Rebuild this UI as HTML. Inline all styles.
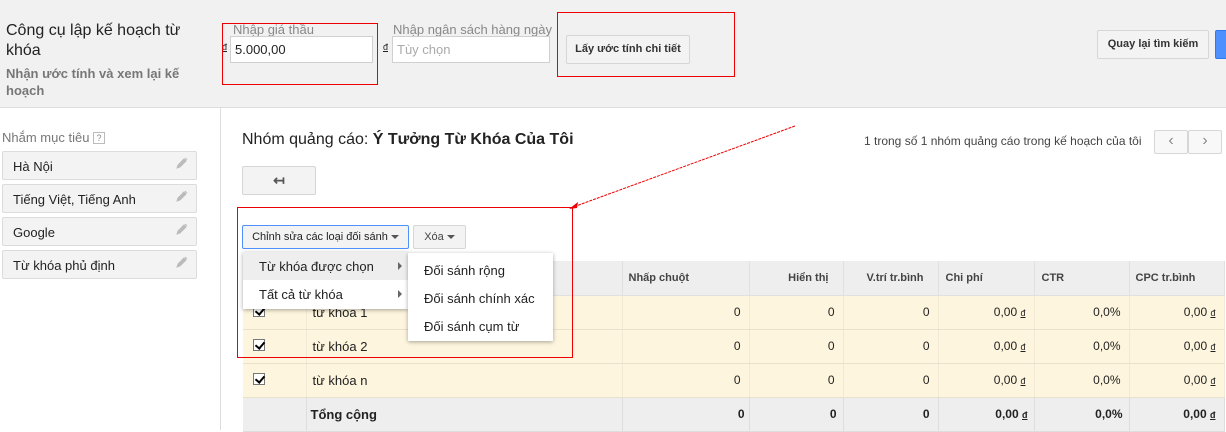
<!DOCTYPE html>
<html><head><meta charset="utf-8"><style>
*{box-sizing:border-box;margin:0;padding:0}
body{width:1226px;height:430px;overflow:hidden;position:relative;background:#fff;font-family:"Liberation Sans",Arial,sans-serif;color:#222}
.a{position:absolute}
.hdr{left:0;top:0;width:1226px;height:108px;background:#f1f1f1;border-bottom:1px solid #ddd}
.btn{position:absolute;background:#f3f3f3;border:1px solid #d6d6d6;border-radius:2px;font-size:11px;font-weight:bold;color:#333;text-align:center;white-space:nowrap}
.inp{position:absolute;background:#fff;border:1px solid #d0d0d0;font-size:13px;padding:5px 4px}
.side{left:0;top:108px;width:221px;height:322px;border-right:1px solid #ddd}
.tg{position:absolute;left:2px;width:195px;height:29px;background:#f3f3f3;border:1px solid #dcdcdc;border-radius:2px;font-size:13px;padding:7px 10px;color:#222}
.pen{position:absolute;right:8px;top:5px;width:12px;height:12px}
.red{position:absolute;border:1px solid #e00}
table{position:absolute;left:243px;top:261px;border-collapse:collapse;font-size:12px}
td{height:34px;border-right:1px solid #f0ead5;border-bottom:1px solid #e8e2cc;background:#fdf5dd;text-align:right;padding-right:8px;color:#222}
tr.h td{background:#eee;font-weight:bold;color:#444;border-color:#e0e0e0;font-size:11px}
tr.t td{background:#eee;font-weight:bold;border-color:#ddd}
.cb{display:inline-block;width:12px;height:12px;border:1px solid #777;background:#fff;position:relative}
.cb:after{content:"";position:absolute;left:3px;top:0px;width:4px;height:7px;border:solid #000;border-width:0 2px 2px 0;transform:rotate(40deg)}
.menu{position:absolute;background:#fff;box-shadow:0 1px 4px rgba(0,0,0,.35);font-size:13px}
.mi{height:28px;padding:7px 16px;position:relative}
.mi .ar{position:absolute;right:6px;top:10px;border-left:4px solid #666;border-top:4px solid transparent;border-bottom:4px solid transparent}
.dd{display:inline-block;border-top:4px solid #555;border-left:4px solid transparent;border-right:4px solid transparent;vertical-align:middle;margin-left:3px}
</style></head><body>
<div class="a hdr"></div>
<div class="a" style="left:6px;top:21px;font-size:16px;line-height:20px;color:#222;width:190px">Công cụ lập kế hoạch từ khóa</div>
<div class="a" style="left:6px;top:65px;font-size:13px;line-height:17px;color:#777;font-weight:bold;width:200px">Nhận ước tính và xem lại kế hoạch</div>
<div class="a" style="left:233px;top:22px;font-size:13px;color:#888">Nhập giá thầu</div>
<div class="a" style="left:222px;top:42px;font-size:9px;text-decoration:underline">đ</div>
<div class="inp" style="left:230px;top:36px;width:143px;height:27px;color:#222">5.000,00</div>
<div class="a" style="left:393px;top:22px;font-size:13px;color:#888">Nhập ngân sách hàng ngày</div>
<div class="a" style="left:383px;top:42px;font-size:9px;text-decoration:underline">đ</div>
<div class="inp" style="left:392px;top:36px;width:158px;height:27px;color:#aaa">Tùy chọn</div>
<div class="btn" style="left:566px;top:35px;width:124px;height:29px;line-height:27px">Lấy ước tính chi tiết</div>
<div class="btn" style="left:1097px;top:30px;width:112px;height:29px;line-height:27px">Quay lại tìm kiếm</div>
<div class="a" style="left:1215px;top:30px;width:14px;height:29px;background:#4d90fe;border:1px solid #3079ed;border-radius:2px"></div>
<div class="red" style="left:222px;top:23px;width:156px;height:62px"></div>
<div class="red" style="left:557px;top:12px;width:178px;height:65px"></div>

<div class="a side"></div>
<div class="a" style="left:2px;top:130px;font-size:13px;color:#777">Nhắm mục tiêu <span style="display:inline-block;width:12px;height:12px;border:1px solid #bbb;font-size:9px;text-align:center;line-height:10px;color:#888;vertical-align:1px">?</span></div>
<div class="tg" style="top:151px">Hà Nội<svg class="pen" viewBox="0 0 12 12"><path d="M1 11l1-3 6-6 2 2-6 6z M9 1l2 2" fill="#bbb" stroke="#bbb"/></svg></div>
<div class="tg" style="top:184px">Tiếng Việt, Tiếng Anh<svg class="pen" viewBox="0 0 12 12"><path d="M1 11l1-3 6-6 2 2-6 6z M9 1l2 2" fill="#bbb" stroke="#bbb"/></svg></div>
<div class="tg" style="top:217px">Google<svg class="pen" viewBox="0 0 12 12"><path d="M1 11l1-3 6-6 2 2-6 6z M9 1l2 2" fill="#bbb" stroke="#bbb"/></svg></div>
<div class="tg" style="top:250px">Từ khóa phủ định<svg class="pen" viewBox="0 0 12 12"><path d="M1 11l1-3 6-6 2 2-6 6z M9 1l2 2" fill="#bbb" stroke="#bbb"/></svg></div>

<div class="a" style="left:242px;top:131px;font-size:16px;color:#222">Nhóm quảng cáo: <b>Ý Tưởng Từ Khóa Của Tôi</b></div>
<div class="a" style="left:864px;top:134px;font-size:12px;color:#444">1 trong số 1 nhóm quảng cáo trong kế hoạch của tôi</div>
<div class="btn" style="left:1154px;top:130px;width:34px;height:24px;background:#f8f8f8;font-weight:normal;color:#888;font-size:16px;line-height:20px">‹</div>
<div class="btn" style="left:1188px;top:130px;width:34px;height:24px;background:#f8f8f8;font-weight:normal;color:#888;font-size:16px;line-height:20px">›</div>
<div class="btn" style="left:242px;top:166px;width:74px;height:29px;line-height:26px;font-size:14px;color:#555">↤</div>

<table>
<tr class="h"><td style="width:63px"></td><td style="width:316px"></td><td style="width:127px;text-align:left;padding-left:6px">Nhấp chuột</td><td style="width:94px;padding-right:14px">Hiển thị</td><td style="width:95px;padding-right:14px">V.trí tr.bình</td><td style="width:96px;text-align:left;padding-left:7px">Chi phí</td><td style="width:95px;text-align:left;padding-left:7px">CTR</td><td style="width:95px;text-align:left;padding-left:6px">CPC tr.bình</td></tr>
<tr><td style="text-align:left;padding-left:10px"><span class="cb"></span></td><td style="text-align:left;padding-left:6px;font-size:13px">từ khóa 1</td><td>0</td><td>0</td><td>0</td><td>0,00 <u style="font-size:9px">đ</u></td><td>0,0%</td><td>0,00 <u style="font-size:9px">đ</u></td></tr>
<tr><td style="text-align:left;padding-left:10px"><span class="cb"></span></td><td style="text-align:left;padding-left:6px;font-size:13px">từ khóa 2</td><td>0</td><td>0</td><td>0</td><td>0,00 <u style="font-size:9px">đ</u></td><td>0,0%</td><td>0,00 <u style="font-size:9px">đ</u></td></tr>
<tr><td style="text-align:left;padding-left:10px"><span class="cb"></span></td><td style="text-align:left;padding-left:6px;font-size:13px">từ khóa n</td><td>0</td><td>0</td><td>0</td><td>0,00 <u style="font-size:9px">đ</u></td><td>0,0%</td><td>0,00 <u style="font-size:9px">đ</u></td></tr>
<tr class="t"><td></td><td style="text-align:left;padding-left:4px;font-size:13px">Tổng cộng</td><td style="padding-right:4px">0</td><td style="padding-right:6px">0</td><td style="padding-right:8px">0</td><td style="padding-right:6px">0,00 <u style="font-size:9px">đ</u></td><td style="padding-right:6px">0,0%</td><td style="padding-right:8px">0,00 <u style="font-size:9px">đ</u></td></tr>
</table>

<div class="btn" style="left:242px;top:225px;width:167px;height:24px;line-height:22px;font-weight:normal;border-color:#4d90fe;font-size:11px;color:#222">Chỉnh sửa các loại đối sánh<span class="dd"></span></div>
<div class="btn" style="left:413px;top:225px;width:53px;height:24px;line-height:22px;font-weight:normal;font-size:11px;color:#444">Xóa<span class="dd"></span></div>
<div class="menu" style="left:243px;top:252px;width:165px;height:57px">
<div class="mi" style="background:#eee">Từ khóa được chọn<span class="ar"></span></div>
<div class="mi">Tất cả từ khóa<span class="ar"></span></div></div>
<div class="menu" style="left:408px;top:253px;width:145px;height:88px;padding-top:3px">
<div class="mi">Đối sánh rộng</div><div class="mi">Đối sánh chính xác</div><div class="mi">Đối sánh cụm từ</div></div>
<div class="red" style="left:237px;top:207px;width:336px;height:151px"></div>
<svg class="a" style="left:0;top:0" width="1226" height="430"><line x1="795" y1="126" x2="576" y2="206" stroke="#e00" stroke-width="1" stroke-dasharray="3,1"/><path d="M569 209l9-7-1 6z" fill="#e00"/></svg>
</body></html>
